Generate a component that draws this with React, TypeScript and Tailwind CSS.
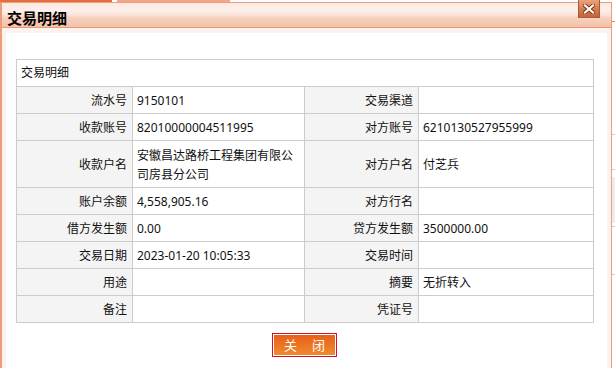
import React from "react";

type Cell = { label: string; value: string };

const rows: [Cell, Cell][] = [
  [{ label: "流水号", value: "9150101" }, { label: "交易渠道", value: "" }],
  [{ label: "收款账号", value: "82010000004511995" }, { label: "对方账号", value: "6210130527955999" }],
  [{ label: "收款户名", value: "安徽昌达路桥工程集团有限公司房县分公司" }, { label: "对方户名", value: "付芝兵" }],
  [{ label: "账户余额", value: "4,558,905.16" }, { label: "对方行名", value: "" }],
  [{ label: "借方发生额", value: "0.00" }, { label: "贷方发生额", value: "3500000.00" }],
  [{ label: "交易日期", value: "2023-01-20 10:05:33" }, { label: "交易时间", value: "" }],
  [{ label: "用途", value: "" }, { label: "摘要", value: "无折转入" }],
  [{ label: "备注", value: "" }, { label: "凭证号", value: "" }],
];

function CloseIcon() {
  return (
    <svg width="12" height="10" viewBox="0 0 12 10">
      <path d="M2 1.5 L10 8.5 M10 1.5 L2 8.5" stroke="#7a3518" strokeWidth="4" strokeLinecap="square" />
      <path d="M2 1.5 L10 8.5 M10 1.5 L2 8.5" stroke="#ffffff" strokeWidth="2.2" strokeLinecap="square" />
    </svg>
  );
}

export default function App() {
  return (
    <div className="w-[615px] h-[368px] overflow-hidden bg-white flex flex-col font-['Noto_Sans','Noto_Sans_CJK_SC',sans-serif]">
      {/* tabs of the page behind */}
      <div className="h-[2px] shrink-0 flex gap-[5px]">
        <div className="w-[112px] bg-[#e2703e]" />
        <div className="w-[113px] bg-[#f0a688]" />
      </div>

      <div className="flex-1 flex">
        {/* dialog */}
        <div className="w-[612px] shrink-0 border-t border-r border-l-2 border-[#ee9d7c] bg-[#fdf3ee] flex flex-col">
          <div className="relative h-[25px] shrink-0 border-b border-[#e99878] bg-[linear-gradient(#fbe9e2,#fdf0eb_30%,#fbe3d8_50%,#f8d2c0_60%,#f4c1a8)] flex items-center pl-[5px]">
            <span className="text-[15px] font-bold text-black leading-none pt-[7px]">交易明细</span>
            <div className="absolute -top-[3px] right-[11px] w-[22px] h-[18px] border border-[#a85a36] border-t-0 bg-[linear-gradient(#eaa27e,#d57a50_55%,#c4653c)] flex items-center justify-center">
              <CloseIcon />
            </div>
          </div>

          <div className="flex-1 pt-[5px] px-[4px]">
            <div className="h-full bg-white pt-[26px] pl-[10px]">
              <table className="table-fixed border-collapse w-[577px] text-[12px] text-[#111]">
                <colgroup>
                  <col className="w-[116px]" />
                  <col className="w-[172px]" />
                  <col className="w-[114px]" />
                  <col className="w-[175px]" />
                </colgroup>
                <tbody>
                  <tr>
                    <td colSpan={4} className="h-[27px] border border-[#cccccc] px-[4px] text-left">
                      交易明细
                    </td>
                  </tr>
                  {rows.map((row, i) => (
                    <tr key={i}>
                      {row.map((c) => (
                        <React.Fragment key={c.label}>
                          <td className={`${i === 2 ? "h-[47px]" : "h-[27px]"} border border-[#cccccc] bg-[#f4f4f4] pr-[5px] pt-px text-right`}>
                            {c.label}
                          </td>
                          <td className="border border-[#cccccc] px-[4px] pt-px text-left leading-[19px]">
                            {c.value}
                          </td>
                        </React.Fragment>
                      ))}
                    </tr>
                  ))}
                </tbody>
              </table>

              <div className="w-[577px] flex justify-center mt-[10px]">
                <button className="w-[65px] h-[24px] border border-[#d8102c] p-px bg-white">
                  <span className="flex h-full w-full items-center justify-center gap-[15px] whitespace-nowrap bg-[linear-gradient(#e8601c,#f08a2c)] text-[13px] text-white leading-none">
                    <span>关</span>
                    <span>闭</span>
                  </span>
                </button>
              </div>
            </div>
          </div>
        </div>

        {/* sliver of the page behind */}
        <div className="flex-1 flex flex-col">
          <div className="h-[20px] border-b border-[#e98a60]" />
          <div className="h-[113px] border-b border-[#cfcfcf]" />
          <div className="h-[35px] border-b border-[#cfcfcf]" />
          <div className="h-[7px]" />
          <div className="h-[46px] bg-[#ececec]" />
          <div className="h-[4px] border-b border-[#c8c8c8]" />
          <div className="h-[48px] border-b border-[#cfcfcf]" />
        </div>
      </div>
    </div>
  );
}
